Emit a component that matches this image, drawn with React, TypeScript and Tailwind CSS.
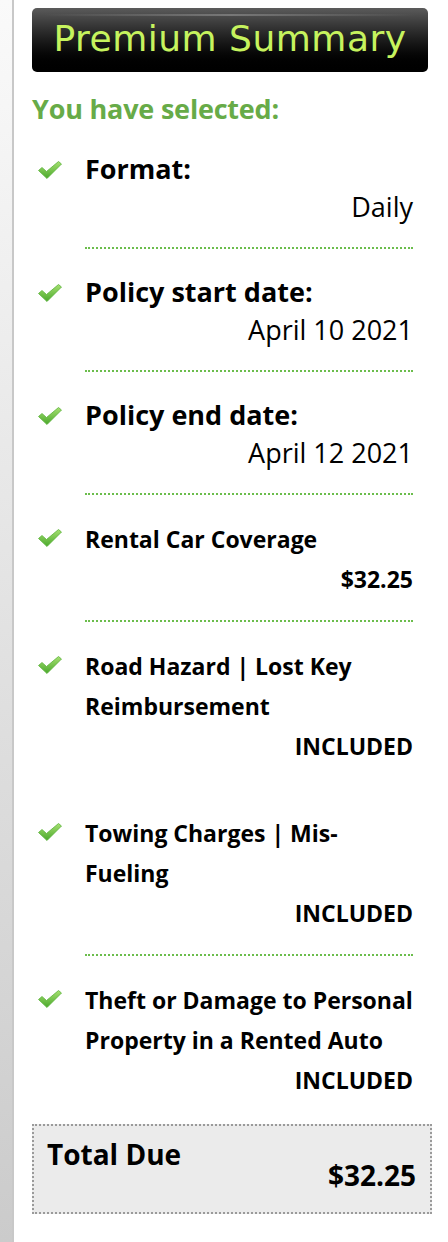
import React from 'react';

type Row = {
  label: string[];
  value: string;
  big?: boolean;
  line?: boolean;
};

const rows: Row[] = [
  { label: ['Format:'], value: 'Daily', big: true, line: true },
  { label: ['Policy start date:'], value: 'April 10 2021', big: true, line: true },
  { label: ['Policy end date:'], value: 'April 12 2021', big: true, line: true },
  { label: ['Rental Car Coverage'], value: '$32.25', line: true },
  { label: ['Road Hazard | Lost Key', 'Reimbursement'], value: 'INCLUDED' },
  { label: ['Towing Charges | Mis-', 'Fueling'], value: 'INCLUDED', line: true },
  { label: ['Theft or Damage to Personal', 'Property in a Rented Auto'], value: 'INCLUDED' },
];

function Check() {
  return (
    <svg width="26" height="20" viewBox="0 0 26 20" className="shrink-0">
      <defs>
        <linearGradient id="chk" x1="0" y1="0" x2="0" y2="1">
          <stop offset="0" stopColor="#a6e070" />
          <stop offset="1" stopColor="#4aa82c" />
        </linearGradient>
      </defs>
      <path
        d="M1.5 10.5 L5 7.5 L9.5 11.5 L21.5 1.5 L24.5 4 L10 18.5 Z"
        fill="url(#chk)"
        stroke="#5bb33a"
        strokeWidth="0.8"
        strokeLinejoin="round"
      />
    </svg>
  );
}

export default function App() {
  return (
    <div className="min-h-[1242px] w-[448px] flex bg-white" style={{ fontFamily: '"Open Sans", "Noto Sans", sans-serif' }}>
      <div className="w-[14px] shrink-0 bg-gradient-to-b from-[#fafafa] to-[#cbcbcb] border-r-2 border-[#c8c8c8]" />

      <div className="w-[396px] ml-[18px] pt-[8px]">
        {/* header bar */}
        <div className="relative h-[64px] rounded-[5px] bg-gradient-to-b from-[#5b5b5b] via-[#1c1c1c] to-black flex items-center justify-center overflow-hidden">
          <div className="absolute left-[12px] right-[12px] top-[6px] h-[2px] bg-gradient-to-r from-transparent via-[#8a8a8a] to-transparent opacity-70" />
          <span
            className="text-[36px] leading-none text-[#c6f35e] tracking-[0.5px] pb-[2px]"
            style={{ fontFamily: '"DejaVu Sans", sans-serif' }}
          >
            Premium Summary
          </span>
        </div>

        <div className="mt-[22px] text-[27px] leading-[30px] font-bold text-[#67ab48] tracking-[-0.2px]">You have selected:</div>

        <div className="mt-[26px] flex flex-col">
          {rows.map((r, i) => (
            <div key={i} className={i === 0 ? 'flex' : 'flex mt-[24px]'}>
              <div className={r.big ? 'w-[53px] pl-[5px] pt-[10px]' : 'w-[53px] pl-[5px] pt-[9px]'}>
                <Check />
              </div>
              <div
                className={
                  'w-[328px] pb-[21px] border-b-2 border-dotted ' +
                  (r.line ? 'border-[#6bbd4c]' : 'border-transparent')
                }
              >
                {r.label.map((l, j) => (
                  <div
                    key={j}
                    className={
                      r.big
                        ? 'text-[27px] leading-[38px] font-bold text-black whitespace-nowrap'
                        : 'text-[23px] leading-[40px] font-bold text-black whitespace-nowrap'
                    }
                  >
                    {l}
                  </div>
                ))}
                <div
                  className={
                    r.big
                      ? 'text-right text-[27px] leading-[38px] text-black'
                      : 'text-right text-[23px] leading-[40px] font-bold text-black'
                  }
                >
                  {r.value}
                </div>
              </div>
            </div>
          ))}
        </div>

        <div className="mt-[1px] w-[400px] h-[90px] bg-[#ebebeb] border-2 border-dotted border-[#9a9a9a] flex justify-between pl-[13px] pr-[14px]">
          <div className="text-[28px] leading-[36px] font-bold text-black pt-[10px]">Total Due</div>
          <div className="text-[28px] leading-[36px] font-bold text-black pt-[31px]">$32.25</div>
        </div>
      </div>
    </div>
  );
}
